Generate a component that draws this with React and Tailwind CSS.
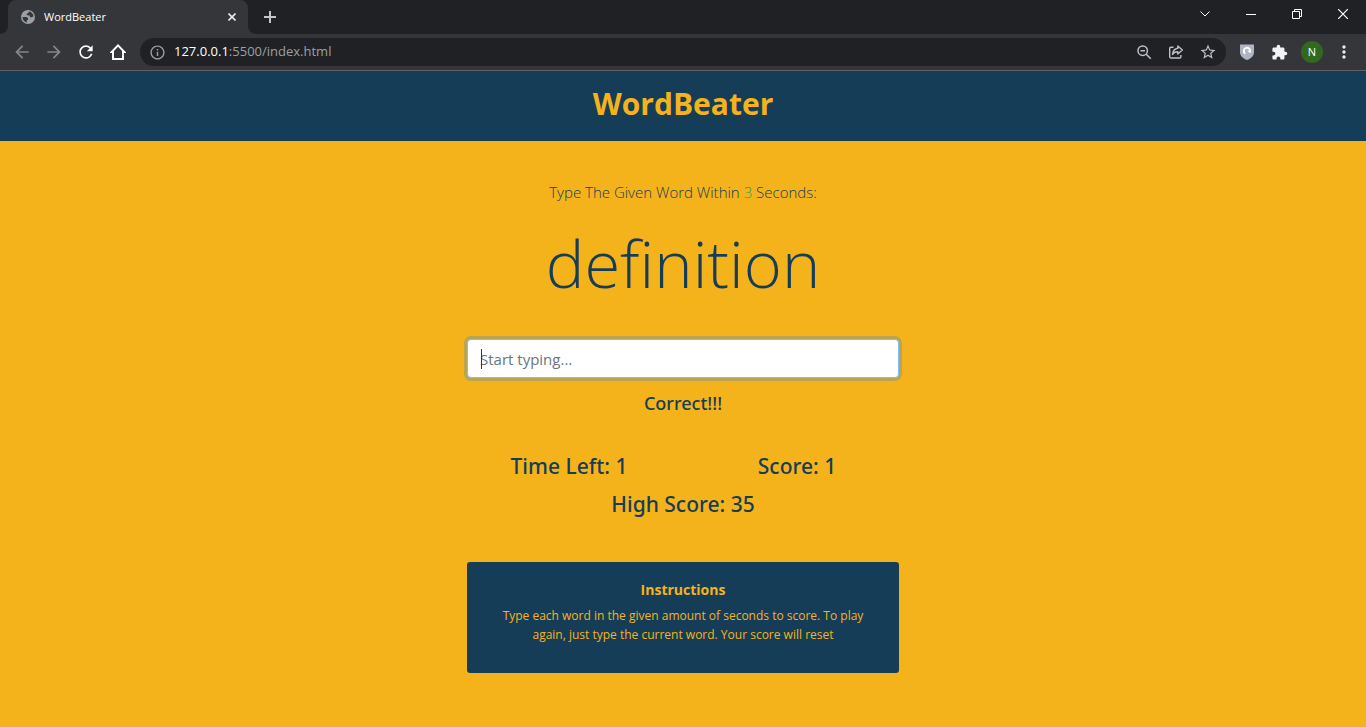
import React from "react";
import {
  MdArrowBack,
  MdArrowForward,
  MdExtension,
  MdInfoOutline,
  MdMoreVert,
  MdRefresh,
  MdStarBorder,
} from "react-icons/md";

function GlobeIcon() {
  return (
    <svg width="14" height="14" viewBox="0 0 14 14" aria-hidden="true">
      <circle cx="7" cy="7" r="7" fill="#9aa0a6" />
      <path
        d="M8.200 1.500C10.600 1.900 12.300 3.900 12.500 6.200L11 7.300 9.300 7.200 8.600 5.600 6.200 5.300 5.400 3.900 7.200 3.100ZM1.500 6.900 5.400 7.100 7.200 8.300 7 9.800 5.800 10.300V12.400C3.200 11.900 1.500 9.700 1.500 6.900Z"
        fill="#35363a"
      />
    </svg>
  );
}

function HomeIcon() {
  return (
    <svg width="16" height="16" viewBox="0 0 16 16" aria-hidden="true">
      <path
        d="M8 0 16 8.200V9H14V16H2V9H0V8.200ZM8 2.800 4 6.900V14H12V6.900Z"
        fill="currentColor"
        fillRule="evenodd"
      />
    </svg>
  );
}

function ZoomOutIcon() {
  return (
    <svg width="15" height="15" viewBox="0 0 15 15" fill="none" stroke="currentColor" strokeWidth="1.5" aria-hidden="true">
      <circle cx="5.700" cy="5.700" r="4.700" />
      <path d="M9.200 9.200 13.800 13.800M3.500 5.700H8" />
    </svg>
  );
}

function ShareIcon() {
  return (
    <svg width="16" height="16" viewBox="0 0 16 16" fill="none" stroke="currentColor" strokeWidth="1.4" aria-hidden="true">
      <path d="M5.500 3.200H3A1.300 1.300 0 0 0 1.700 4.500V12.700A1.300 1.300 0 0 0 3 14H11.600A1.300 1.300 0 0 0 12.900 12.700V11" />
      <path d="M9.800 2 14.400 6 9.800 10V7.700C7.200 7.700 5.600 8.600 4.600 10.400 4.900 7 6.700 4.800 9.800 4.300Z" strokeLinejoin="round" />
    </svg>
  );
}

function ShieldIcon() {
  return (
    <svg width="14" height="16" viewBox="0 0 14 16" aria-hidden="true">
      <path d="M0 .6C4 .4 10 .4 14 .6V8C14 12 11 14.500 7 16 3 14.500 0 12 0 8Z" fill="#aeb4c2" />
      <path d="M5.300 9.700A3.200 3.200 0 1 1 10.200 6.800" fill="none" stroke="#fff" strokeWidth="2" />
      <path d="M7.200 6.800H11.300L10.300 9.200Z" fill="#fff" />
    </svg>
  );
}

function TabStrip() {
  return (
    <div className="flex h-[34px] items-stretch bg-[#202124] text-[#e8eaed]">
      <div className="flex w-2 bg-[#35363a]">
        <span className="w-full rounded-br-lg bg-[#202124]" />
      </div>
      <div className="flex w-60 items-center rounded-t-lg bg-[#35363a] pl-[13px] pr-2">
        <GlobeIcon />
        <span className="ml-[9px] flex-1 text-[11px] text-white">WordBeater</span>
        <button type="button" aria-label="Close tab" className="flex size-4 items-center justify-center">
          <svg width="8" height="8" viewBox="0 0 8 8" stroke="currentColor" strokeWidth="1.6" aria-hidden="true">
            <path d="M.5.5l7 7M7.500.5l-7 7" />
          </svg>
        </button>
      </div>
      <div className="flex w-2 bg-[#35363a]">
        <span className="w-full rounded-bl-lg bg-[#202124]" />
      </div>
      <button type="button" aria-label="New tab" className="flex w-7 items-center justify-center">
        <svg width="12" height="12" viewBox="0 0 12 12" stroke="#c4c7c9" strokeWidth="2" aria-hidden="true">
          <path d="M6 0v12M0 6h12" />
        </svg>
      </button>
      <div className="ml-auto flex h-7 text-white">
        <button type="button" aria-label="Search tabs" className="flex w-[46px] items-center justify-center">
          <svg width="10" height="6" viewBox="0 0 10 6" fill="none" stroke="currentColor" aria-hidden="true">
            <path d="M.5.5 5 5 9.500.5" />
          </svg>
        </button>
        <button type="button" aria-label="Minimize" className="flex w-[46px] items-center justify-center">
          <svg width="10" height="1" viewBox="0 0 10 1" aria-hidden="true">
            <path d="M0 0h10v1H0z" fill="currentColor" />
          </svg>
        </button>
        <button type="button" aria-label="Restore" className="flex w-[46px] items-center justify-center">
          <svg width="10" height="10" viewBox="0 0 10 10" fill="none" stroke="currentColor" aria-hidden="true">
            <path d="M.5 2.500h7v7h-7zM2.500 2.500v-2h7v7h-2" />
          </svg>
        </button>
        <button type="button" aria-label="Close window" className="flex w-[46px] items-center justify-center">
          <svg width="10" height="10" viewBox="0 0 10 10" stroke="currentColor" strokeWidth="1.2" aria-hidden="true">
            <path d="M0 0l10 10M10 0 0 10" />
          </svg>
        </button>
      </div>
    </div>
  );
}

function Toolbar() {
  return (
    <div className="flex h-[37px] items-center border-b border-[#5f6064] bg-[#35363a] pl-[6px] text-[#e8eaed]">
      <button type="button" aria-label="Back" className="flex w-8 justify-center text-[#85878a]">
        <MdArrowBack size={20} />
      </button>
      <button type="button" aria-label="Forward" className="flex w-8 justify-center text-[#85878a]">
        <MdArrowForward size={20} />
      </button>
      <button type="button" aria-label="Reload" className="flex w-8 justify-center text-white">
        <MdRefresh size={20} />
      </button>
      <button type="button" aria-label="Home" className="flex w-8 justify-center text-white">
        <HomeIcon />
      </button>
      <div className="ml-[6px] flex h-7 flex-1 items-center rounded-full bg-[#202124] pl-[9px] pr-[2px] text-[#9aa0a6]">
        <MdInfoOutline size={17} />
        <a href="#url" className="ml-2 flex-1 text-[13px]">
          <span className="text-white">127.0.0.1</span>:5500/index.html
        </a>
        <div className="flex text-[#bdc1c6]">
          <button type="button" aria-label="Zoom" className="flex w-8 items-center justify-center">
            <ZoomOutIcon />
          </button>
          <button type="button" aria-label="Share" className="flex w-8 items-center justify-center">
            <ShareIcon />
          </button>
          <button type="button" aria-label="Bookmark" className="flex w-8 justify-center">
            <MdStarBorder size={18} />
          </button>
        </div>
      </div>
      <div className="flex items-center pl-1 pr-[6px]">
        <button type="button" aria-label="Shield extension" className="flex w-[33px] justify-center">
          <ShieldIcon />
        </button>
        <button type="button" aria-label="Extensions" className="flex w-[33px] justify-center text-[#f1f3f4]">
          <MdExtension size={17} />
        </button>
        <button type="button" aria-label="Profile" className="flex w-8 justify-center">
          <span className="flex size-[22px] items-center justify-center rounded-full bg-[#33691e] text-[11px] text-white">
            N
          </span>
        </button>
        <button type="button" aria-label="Menu" className="flex w-8 justify-center">
          <MdMoreVert size={20} />
        </button>
      </div>
    </div>
  );
}

export default function App() {
  return (
    <div className="flex min-h-screen flex-col bg-[#f5b31b] font-['Open_Sans','Noto_Sans',sans-serif] text-[#163d58]">
      <TabStrip />
      <Toolbar />
      <header className="flex h-[70px] justify-center bg-[#163d58] pt-[14px]">
        <h1 className="text-[30px] leading-[38px] font-bold text-[#f5b31b]">WordBeater</h1>
      </header>
      <main className="mx-auto flex w-full max-w-[432px] flex-col pt-[39px] text-center">
        <p className="text-[15px] leading-6 font-light">
          Type The Given Word Within <span className="text-[#28a745]">3</span> Seconds:
        </p>
        <h2 className="mt-[15px] text-[65px] leading-[88px] font-light">definition</h2>
        <form className="relative mt-8">
          <input
            type="text"
            aria-label="Current word"
            placeholder="Start typing..."
            className="block h-[39px] w-full rounded-sm border border-[#80bdff] bg-white px-3 text-[15px] text-[#495057] caret-transparent ring-3 ring-[#007bff]/25 outline-none placeholder:text-[#6c757d]"
          />
          <span className="absolute top-[10px] left-[14px] h-5 w-px bg-[#343a40]" />
        </form>
        <div className="font-['Noto_Sans','Open_Sans',sans-serif] font-medium">
          <h4 className="mt-[13px] text-[18px] leading-6">Correct!!!</h4>
          <div className="-mx-3 mt-9 grid grid-cols-2 text-[21px] leading-[30px]">
            <h3>Time Left: 1</h3>
            <h3>Score: 1</h3>
            <h3 className="col-span-2 mt-2">High Score: 35</h3>
          </div>
        </div>
        <section className="mt-[43px] rounded-[3px] bg-[#163d58] px-5 pt-[17px] pb-[29px] text-[#f5b31b]">
          <h5 className="text-[14px] leading-[22px] font-bold">Instructions</h5>
          <p className="mt-[5px] text-[12px] leading-[19px]">
            Type each word in the given amount of seconds to score. To play again, just type the current word. Your
            score will reset
          </p>
        </section>
      </main>
    </div>
  );
}
